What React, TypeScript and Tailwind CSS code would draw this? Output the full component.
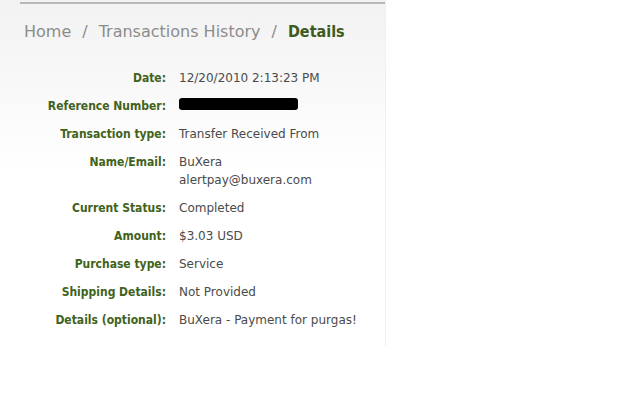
const rows: { label: string; value: React.ReactNode }[] = [
  { label: "Date:", value: "12/20/2010 2:13:23 PM" },
  {
    label: "Reference Number:",
    value: <div className="mt-[1px] h-[12px] w-[119px] rounded-[3px] bg-black" />,
  },
  { label: "Transaction type:", value: "Transfer Received From" },
  {
    label: "Name/Email:",
    value: (
      <div className="flex flex-col leading-[18px]">
        <span>BuXera</span>
        <span>alertpay@buxera.com</span>
      </div>
    ),
  },
  { label: "Current Status:", value: "Completed" },
  { label: "Amount:", value: "$3.03 USD" },
  { label: "Purchase type:", value: "Service" },
  { label: "Shipping Details:", value: "Not Provided" },
  { label: "Details (optional):", value: "BuXera - Payment for purgas!" },
];

export default function App() {
  return (
    <div className="h-[400px] w-[640px] bg-white font-['DejaVu_Sans',sans-serif]">
      <div className="w-[386px] border-r border-r-[#f0f0f0] bg-gradient-to-b from-[#f2f2f2] via-white to-white pb-[17px]">
        <div className="ml-[20px] h-[4px] border-b-2 border-b-[#b8b8b8]" />

        {/* breadcrumb */}
        <div className="flex items-center gap-[11px] pl-[24px] pt-[16px] text-[16px] leading-[24px] text-[#8c8c8c]">
          <span>Home</span>
          <span>/</span>
          <span>Transactions History</span>
          <span>/</span>
          <span className="font-['DejaVu_Sans_Condensed',sans-serif] font-bold text-[#3d5a1c]">Details</span>
        </div>

        {/* details */}
        <div className="mt-[25px] flex flex-col gap-[10px] text-[12px] leading-[18px]">
          {rows.map((r) => (
            <div key={r.label} className="flex">
              <div className="w-[166px] text-right font-['DejaVu_Sans_Condensed',sans-serif] font-bold text-[#41621a]">
                {r.label}
              </div>
              <div className="pl-[13px] text-[#4a4a4a]">{r.value}</div>
            </div>
          ))}
        </div>
      </div>
    </div>
  );
}
